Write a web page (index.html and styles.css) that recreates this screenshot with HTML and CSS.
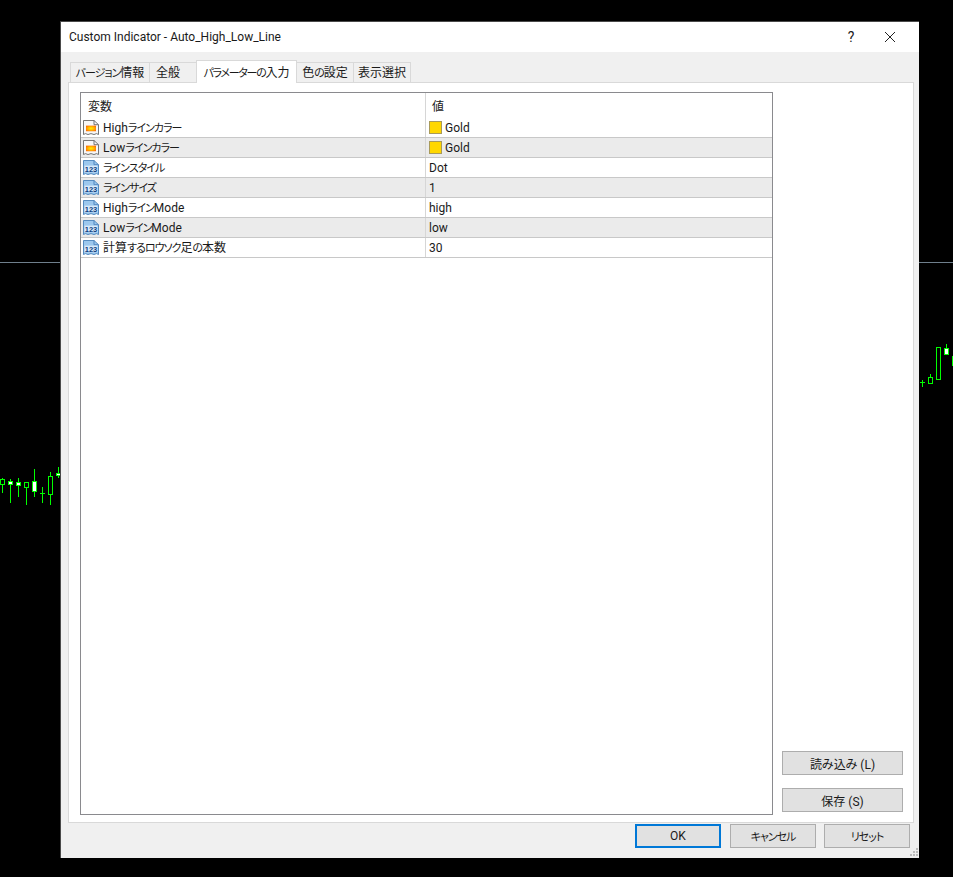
FILE: index.html
```html
<!DOCTYPE html>
<html lang="ja">
<head>
<meta charset="utf-8">
<title>Custom Indicator - Auto_High_Low_Line</title>
<link rel="stylesheet" href="styles.css">
</head>
<body>
<svg width="0" height="0" class="defs">
  <defs>
    <radialGradient id="fire" cx="0.5" cy="0.5" r="0.6">
      <stop offset="0" stop-color="#fff000"/>
      <stop offset="0.5" stop-color="#ffb800"/>
      <stop offset="1" stop-color="#ff6a00"/>
    </radialGradient>
    <symbol id="ico-color" viewBox="0 0 16 16" preserveAspectRatio="none">
      <path d="M0.500 15.500V0.500H11L15.500 5V15.500L13.500 14.500L11 15.500L8 14.500L5 15.500L2.500 14.500Z" fill="#f7f7f7" stroke="#6f6f6f"/>
      <path d="M11 0.500V5H15.500" fill="none" stroke="#6f6f6f"/>
      <rect x="3" y="6" width="10" height="6" fill="url(#fire)"/>
    </symbol>
    <symbol id="ico-num" viewBox="0 0 16 16" preserveAspectRatio="none">
      <path d="M0.500 15.500V0.500H11L15.500 5V15.500L13.500 14.500L11 15.500L8 14.500L5 15.500L2.500 14.500Z" fill="#9cc8ee" stroke="#4f86bd"/>
      <path d="M11 0.500V5H15.500" fill="none" stroke="#4f86bd"/>
      <rect x="1.500" y="6" width="13" height="7" fill="#d8eafa"/>
      <text x="8" y="12.300" class="ico-text">123</text>
    </symbol>
  </defs>
</svg>

<main class="desktop">
  <div class="hline"></div>
  <svg class="chart chart-left" width="61" height="50" viewBox="0 465 61 50">
    <g class="wick">
      <path d="M2.500 478V493M10.500 479V503M18.500 478V497M26.500 482V505M34.500 469V497M42.500 487V503M50.500 472V505M58.500 467V478"/>
      <path d="M40 493.500H45"/>
    </g>
    <rect class="hollow" x="0.500" y="479.500" width="4" height="5"/>
    <rect class="filled" x="8.500" y="481.500" width="4" height="3"/>
    <rect class="filled" x="16.500" y="482.500" width="4" height="3"/>
    <rect class="hollow" x="24.500" y="482.500" width="4" height="5"/>
    <rect class="filled" x="32.500" y="481.500" width="4" height="10"/>
    <rect class="hollow" x="48.500" y="476.500" width="4" height="18"/>
    <rect class="filled" x="56.500" y="473.500" width="4" height="2"/>
  </svg>
  <svg class="chart chart-right" width="34" height="50" viewBox="919 340 34 50">
    <g class="wick">
      <path d="M922.500 380V387M920 382.500H925M930.500 374V378M946.500 344V349"/>
    </g>
    <rect class="hollow" x="928.500" y="377.500" width="4" height="6"/>
    <rect class="hollow" x="936.500" y="347.500" width="4" height="32"/>
    <rect class="filled" x="944.500" y="348.500" width="4" height="6"/>
    <rect class="bright" x="952" y="356" width="1" height="10"/>
  </svg>

  <section class="dialog">
    <header class="titlebar">
      <h1 class="title">Custom Indicator - Auto_High_Low_Line</h1>
      <span class="help">?</span>
      <svg class="close" width="12" height="12" viewBox="0 0 12 12"><path d="M1 1L11 11M11 1L1 11"/></svg>
    </header>

    <div class="content">
      <nav class="tabs">
        <span class="tab tab-version"><span><span class="kana">バージョン</span>情報</span></span>
        <span class="tab tab-general"><span>全般</span></span>
        <span class="tab tab-active"><span><span class="kana kana-tight">パラメーターの</span>入力</span></span>
        <span class="tab tab-colors"><span>色<span class="kana">の</span>設定</span></span>
        <span class="tab tab-display"><span>表示選択</span></span>
      </nav>

      <div class="panel">
        <div class="table">
          <div class="row head">
            <div class="cell name head-name">変数</div>
            <div class="cell value head-value">値</div>
          </div>
          <div class="row">
            <div class="cell name"><svg class="ico"><use href="#ico-color"/></svg><span class="label">High<span class="kana">ラインカラー</span></span></div>
            <div class="cell value"><i class="swatch"></i>Gold</div>
          </div>
          <div class="row alt">
            <div class="cell name"><svg class="ico"><use href="#ico-color"/></svg><span class="label">Low<span class="kana">ラインカラー</span></span></div>
            <div class="cell value"><i class="swatch"></i>Gold</div>
          </div>
          <div class="row">
            <div class="cell name"><svg class="ico"><use href="#ico-num"/></svg><span class="label"><span class="kana">ラインスタイル</span></span></div>
            <div class="cell value">Dot</div>
          </div>
          <div class="row alt">
            <div class="cell name"><svg class="ico"><use href="#ico-num"/></svg><span class="label"><span class="kana">ラインサイズ</span></span></div>
            <div class="cell value">1</div>
          </div>
          <div class="row">
            <div class="cell name"><svg class="ico"><use href="#ico-num"/></svg><span class="label">High<span class="kana">ライン</span>Mode</span></div>
            <div class="cell value">high</div>
          </div>
          <div class="row alt">
            <div class="cell name"><svg class="ico"><use href="#ico-num"/></svg><span class="label">Low<span class="kana">ライン</span>Mode</span></div>
            <div class="cell value">low</div>
          </div>
          <div class="row">
            <div class="cell name"><svg class="ico"><use href="#ico-num"/></svg><span class="label">計算<span class="kana">するロウソク</span>足<span class="kana">の</span>本数</span></div>
            <div class="cell value">30</div>
          </div>
        </div>
        <aside class="side">
          <button class="btn side-btn">読み込み (L)</button>
          <button class="btn side-btn">保存 (S)</button>
        </aside>
      </div>

      <footer class="footer">
        <button class="btn foot-btn primary">OK</button>
        <button class="btn foot-btn"><span class="kana">キャンセル</span></button>
        <button class="btn foot-btn foot-last"><span class="kana">リセット</span></button>
      </footer>
      <svg class="grip" width="9" height="9" viewBox="0 0 9 9">
        <path d="M6 0h2v2H6zM3 3h2v2H3zM6 3h2v2H6zM0 6h2v2H0zM3 6h2v2H3zM6 6h2v2H6z"/>
      </svg>
    </div>
  </section>
</main>
</body>
</html>
```

FILE: styles.css
```css
* { box-sizing: border-box; }

html, body {
  margin: 0;
  height: 100%;
  background: #000;
}

body {
  font-family: Roboto, "Noto Sans CJK JP", sans-serif;
  font-feature-settings: "palt";
  font-size: 12px;
  color: #1a1a1a;
  overflow: hidden;
}

.defs { position: absolute; }

.kana {
  font-size: 11px;
  letter-spacing: -1px;
}
.kana-tight { letter-spacing: -1.300px; }

.label { display: block; line-height: 15px; padding-top: 2px; }

.ico-text {
  font-family: "Liberation Sans", sans-serif;
  font-size: 7.500px;
  font-weight: 700;
  fill: #0f3f7f;
  text-anchor: middle;
}

.desktop {
  position: relative;
  width: 953px;
  height: 877px;
  background: #000;
}

.hline {
  position: absolute;
  left: 0;
  right: 0;
  top: 262px;
  height: 1px;
  background: #6f7f8c;
}

.chart { position: absolute; display: block; }
.chart-left { left: 0; top: 465px; }
.chart-right { left: 919px; top: 340px; }

.wick path { stroke: #00ff00; stroke-width: 1; fill: none; }
.hollow { fill: #000; stroke: #00ff00; }
.filled { fill: #fff; stroke: #00ff00; }
.bright { fill: #00ff00; }

.dialog {
  position: absolute;
  left: 60px;
  top: 21px;
  width: 859px;
  height: 837px;
  display: flex;
  flex-direction: column;
  background: #f0f0f0;
  border-left: 1px solid #4a4a4a;
  border-top: 1px solid #4a4a4a;
}

.titlebar {
  flex: none;
  height: 30px;
  display: flex;
  align-items: center;
  padding: 0 23px 1px 8px;
  background: #fff;
}

.title {
  margin: 0;
  flex: 1;
  font-size: 12px;
  font-weight: 400;
  color: #1a1a1a;
}

.help {
  width: 12px;
  margin-right: 27px;
  font-size: 14px;
  text-align: center;
}

.close { display: block; }
.close path { stroke: #222; stroke-width: 1; fill: none; }

.content {
  position: relative;
  flex: 1;
  min-height: 0;
  display: flex;
  flex-direction: column;
  padding: 8px 5px 0 7px;
}

.tabs {
  flex: none;
  height: 22px;
  display: flex;
  align-items: flex-end;
  padding-left: 2px;
  position: relative;
  z-index: 1;
}

.tab {
  height: 20px;
  display: flex;
  align-items: center;
  justify-content: center;
  padding-bottom: 3px;
  background: #f0f0f0;
  border: 1px solid #d9d9d9;
  border-bottom: 0;
  border-right: 0;
  white-space: nowrap;
}

.tab-version { width: 79px; }
.tab-general { width: 47px; justify-content: flex-start; padding-left: 6px; }
.tab-active {
  width: 101px;
  height: 23px;
  margin-bottom: -1px;
  padding-bottom: 2px;
  background: #fff;
  border-right: 1px solid #d9d9d9;
}
.tab-colors { width: 56px; border-left: 0; }
.tab-display { width: 58px; border-right: 1px solid #d9d9d9; }

.panel {
  flex: none;
  height: 741px;
  display: flex;
  gap: 9px;
  padding: 9px 10px 7px 11px;
  background: #fff;
  border: 1px solid #d9d9d9;
}

.table {
  width: 693px;
  border: 1px solid #8a8a8e;
  background: #fff;
}

.row {
  display: grid;
  grid-template-columns: 344px 1fr;
  height: 20px;
  border-bottom: 1px solid #c8c8c8;
  border-top: 0;
}
.row.alt { background: #ebebeb; }
.row.head { height: 25px; border-bottom: 0; }

.cell {
  display: flex;
  align-items: center;
  white-space: nowrap;
}

.name { padding-left: 2px; }
.value { padding-left: 3px; border-left: 1px solid #d6d6d6; }
.head-name { padding-left: 7px; }
.head-value { padding-left: 6px; }

.ico {
  width: 16px;
  height: 15px;
  margin-right: 4px;
  flex: none;
}

.swatch {
  display: block;
  width: 13px;
  height: 13px;
  margin-right: 3px;
  background: #ffd700;
  border: 1px solid #a89a5a;
}

.side {
  width: 121px;
  display: flex;
  flex-direction: column;
  justify-content: flex-end;
  gap: 13px;
  padding-bottom: 3px;
}

.btn {
  display: block;
  font: inherit;
  font-feature-settings: "palt";
  color: #1a1a1a;
  background: #e1e1e1;
  border: 1px solid #adadad;
  padding: 0;
}

.side-btn { width: 121px; height: 24px; }

.footer {
  flex: none;
  display: flex;
  justify-content: flex-end;
  gap: 9px;
  padding: 1px 4px 0 0;
}

.foot-btn { width: 86px; height: 24px; }
.foot-last { margin-left: -1px; }
.primary { border: 2px solid #0078d7; }

.grip {
  position: absolute;
  right: 0;
  bottom: 1px;
}
.grip path { fill: #bdbdbd; }
```
